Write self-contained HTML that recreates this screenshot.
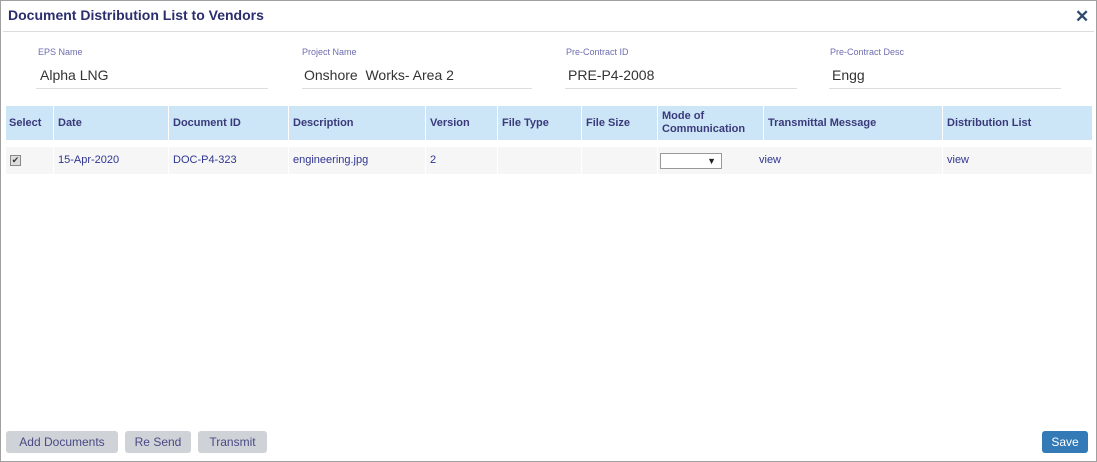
<!DOCTYPE html><html><head><style>
body{margin:0;width:1097px;height:462px;overflow:hidden;background:#fff;font-family:"Liberation Sans",sans-serif;}
.box{position:absolute;left:0;top:0;width:1095px;height:460px;border:1px solid #a0a0a0;}
.a{position:absolute;}
.t{left:8px;top:7px;font-size:14px;font-weight:bold;color:#2b2d6e;}
.hr{left:3px;top:31px;width:1091px;height:1px;background:#dcdcdc;}
.lbl{font-size:9px;color:#6d6db0;top:47px;}
.val{font-size:14px;color:#333;top:67px;}
.ul{height:1px;background:#ddd;top:88px;}
.th{top:106px;height:34px;background:#cce5f7;font-size:11px;font-weight:bold;color:#3a3a7a;}
.th div,.tr div{position:absolute;top:0;height:100%;border-left:1px solid #fff;box-sizing:border-box;padding-left:4px;display:flex;align-items:center;line-height:13px;}
.tr{top:147px;height:27px;background:#f6f6f6;font-size:11px;color:#2f3590;}
.btn{top:431px;height:22px;background:#cfd2d7;border-radius:3px;font-size:12px;color:#4a4a86;text-align:center;line-height:22px;}
</style></head><body><div class="box"></div>
<div class="a t">Document Distribution List to Vendors</div>
<div class="a" style="left:1075px;top:7px;font-size:17px;font-weight:bold;color:#2e4a6a;">✕</div>
<div class="a hr"></div>
<div class="a lbl" style="left:38px">EPS Name</div><div class="a val" style="left:40px">Alpha LNG</div><div class="a ul" style="left:36px;width:232px"></div>
<div class="a lbl" style="left:302px">Project Name</div><div class="a val" style="left:304px">Onshore&nbsp; Works- Area 2</div><div class="a ul" style="left:302px;width:230px"></div>
<div class="a lbl" style="left:566px">Pre-Contract ID</div><div class="a val" style="left:568px">PRE-P4-2008</div><div class="a ul" style="left:565px;width:232px"></div>
<div class="a lbl" style="left:830px">Pre-Contract Desc</div><div class="a val" style="left:832px">Engg</div><div class="a ul" style="left:829px;width:232px"></div>
<div class="a th" style="left:6px;width:1086px">
<div style="left:0;width:47px;border:0;padding-left:3px">Select</div><div style="left:47px;width:115px">Date</div><div style="left:162px;width:120px">Document ID</div><div style="left:282px;width:137px">Description</div><div style="left:419px;width:72px">Version</div><div style="left:491px;width:84px">File Type</div><div style="left:575px;width:76px">File Size</div><div style="left:651px;width:106px">Mode of<br>Communication</div><div style="left:757px;width:179px">Transmittal Message</div><div style="left:936px;width:150px">Distribution List</div></div>
<div class="a tr" style="left:6px;width:1086px">
<div style="left:0;width:47px;border:0"><span style="display:inline-block;width:9px;height:9px;border:1px solid #888;background:#ddd;font-size:9px;line-height:9px;color:#333;text-align:center">✔</span></div><div style="left:47px;width:115px">15-Apr-2020</div><div style="left:162px;width:120px">DOC-P4-323</div><div style="left:282px;width:137px">engineering.jpg</div><div style="left:419px;width:72px">2</div><div style="left:491px;width:84px"></div><div style="left:575px;width:76px"></div><div style="left:651px;width:99px;padding-left:2px"><span style="display:inline-block;width:60px;height:14px;border:1px solid #999;background:#fff;font-size:9px;text-align:right;color:#222;line-height:14px">▼&nbsp;&nbsp;</span></div><div style="left:750px;width:186px;border:0;padding-left:3px">view</div><div style="left:936px;width:150px">view</div></div>
<div class="a btn" style="left:6px;width:112px">Add Documents</div>
<div class="a btn" style="left:125px;width:66px">Re Send</div>
<div class="a btn" style="left:198px;width:69px">Transmit</div>
<div class="a btn" style="left:1042px;width:46px;background:#337ab7;color:#fff">Save</div>
</body></html>
